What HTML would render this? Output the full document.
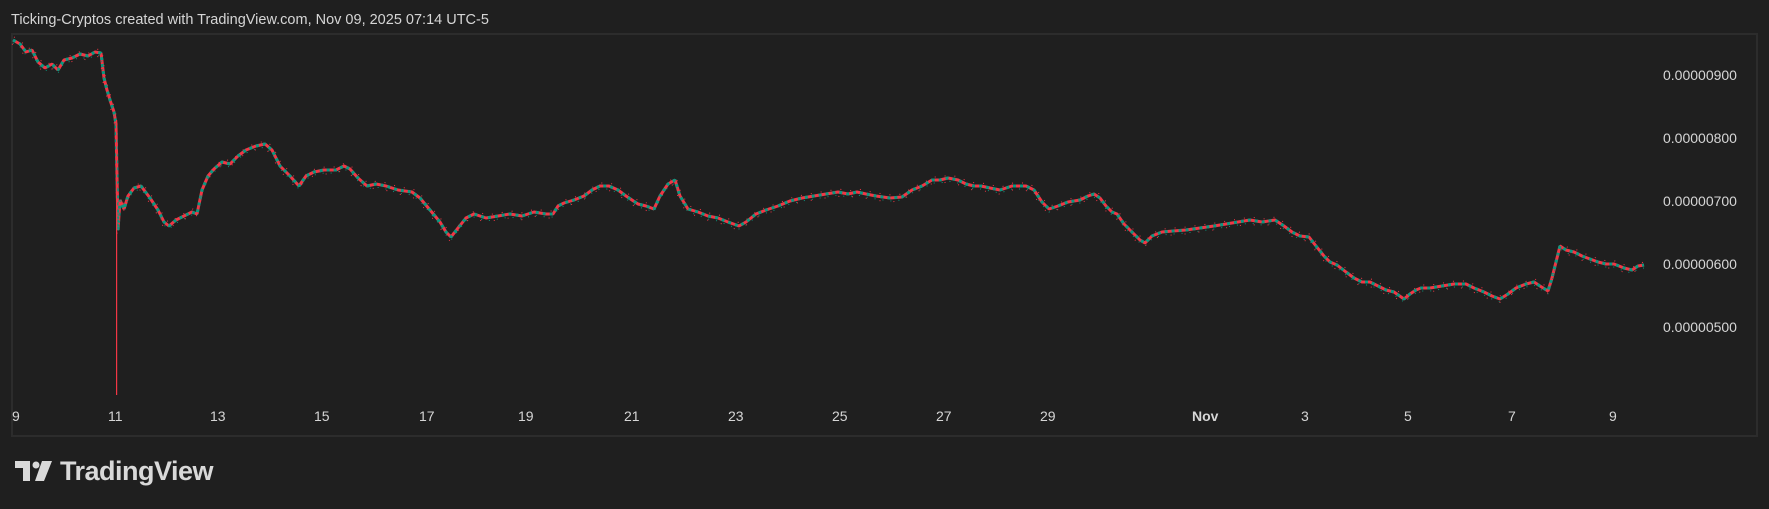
<!DOCTYPE html>
<html><head><meta charset="utf-8"><style>
html,body{margin:0;padding:0;background:#1f1f1f;width:1769px;height:509px;overflow:hidden;font-family:"Liberation Sans",sans-serif;}
.t{position:absolute;color:#d6d6d6;font-size:14px;}
#frame{position:absolute;left:11px;top:33px;width:1743px;height:400px;border:2px solid #2c2c2c;box-sizing:content-box;}
</style></head><body>
<div class="t" style="left:11px;top:12px;font-size:14.5px;">Ticking-Cryptos created with TradingView.com, Nov 09, 2025 07:14 UTC-5</div>
<div id="frame"></div>
<svg width="1769" height="509" style="position:absolute;left:0;top:0">
<defs>
<polyline id="p" points="13,40 20,44 26,52 32,50 38,62 45,68 52,64 58,70 64,60 72,58 80,54 88,56 95,52 101,53 104,78 107,90 110,100 114,112 116,124 118,230 120,200 124,209 128,196 134,188 141,186 150,198 158,210 164,222 169,226 176,220 184,216 192,212 197,214 202,190 208,176 214,169 222,162 230,164 238,156 246,150 256,146 265,144 272,150 280,166 290,176 299,186 306,176 314,172 324,170 336,170 344,166 350,169 358,178 367,186 376,184 386,186 398,190 412,192 420,198 430,210 440,222 446,232 451,237 458,228 466,218 474,214 486,218 498,216 510,214 522,216 534,212 546,214 553,214 558,206 564,203 574,200 584,196 592,190 600,186 609,186 618,190 626,196 638,204 646,206 654,209 660,196 668,184 675,180 680,196 688,209 698,212 708,216 718,218 728,222 739,226 746,222 756,214 766,210 778,206 790,201 802,198 814,196 826,194 838,192 848,194 857,192 866,194 876,196 890,198 902,197 912,190 922,186 932,180 940,180 948,178 958,180 966,184 974,186 981,186 990,188 1000,190 1012,186 1026,186 1034,190 1042,202 1049,209 1058,206 1068,202 1080,200 1088,196 1094,194 1100,198 1106,206 1112,212 1117,214 1124,224 1134,234 1140,240 1145,243 1152,236 1162,232 1173,231 1186,230 1200,228 1214,226 1226,224 1238,222 1250,220 1262,222 1275,220 1284,226 1292,232 1300,236 1309,237 1316,246 1324,256 1330,262 1337,265 1346,272 1354,278 1362,282 1370,282 1378,286 1386,290 1394,292 1404,299 1410,294 1416,290 1421,288 1430,288 1442,286 1454,284 1466,284 1474,288 1484,292 1492,296 1500,299 1508,294 1516,288 1526,284 1534,282 1540,286 1548,291 1552,278 1556,262 1560,246 1566,250 1574,252 1582,256 1590,259 1598,262 1606,264 1614,264 1624,268 1632,270 1638,266 1644,265"/>
</defs>
<g fill="none" stroke-linejoin="bevel">
<use href="#p" stroke="#f23645" stroke-width="3"/>
<use href="#p" stroke="#089981" stroke-width="3" stroke-dasharray="3 4"/>
<use href="#p" stroke="#089981" stroke-width="1" transform="translate(0,3)" stroke-dasharray="1 7"/>
<use href="#p" stroke="#f23645" stroke-width="1" transform="translate(1,-3)" stroke-dasharray="1 9"/>
<use href="#p" stroke="#f23645" stroke-width="1" transform="translate(-1,4)" stroke-dasharray="1 13"/>
</g>
<rect x="116" y="120" width="1.2" height="275" fill="#f23645"/>
</svg>
<div class="t" style="left:1663px;top:67px">0.00000900</div>
<div class="t" style="left:1663px;top:130px">0.00000800</div>
<div class="t" style="left:1663px;top:193px">0.00000700</div>
<div class="t" style="left:1663px;top:256px">0.00000600</div>
<div class="t" style="left:1663px;top:319px">0.00000500</div>
<div class="t" style="left:12px;top:408px">9</div>
<div class="t" style="left:108px;top:408px">11</div>
<div class="t" style="left:210px;top:408px">13</div>
<div class="t" style="left:314px;top:408px">15</div>
<div class="t" style="left:419px;top:408px">17</div>
<div class="t" style="left:518px;top:408px">19</div>
<div class="t" style="left:624px;top:408px">21</div>
<div class="t" style="left:728px;top:408px">23</div>
<div class="t" style="left:832px;top:408px">25</div>
<div class="t" style="left:936px;top:408px">27</div>
<div class="t" style="left:1040px;top:408px">29</div>
<div class="t" style="left:1192px;top:408px;font-weight:bold">Nov</div>
<div class="t" style="left:1301px;top:408px">3</div>
<div class="t" style="left:1404px;top:408px">5</div>
<div class="t" style="left:1508px;top:408px">7</div>
<div class="t" style="left:1609px;top:408px">9</div>
<svg style="position:absolute;left:15px;top:461px" width="40" height="22" viewBox="0 0 40 22">
<path d="M0 0H15V20H8V7H0Z" fill="#d9d9d9"/><circle cx="21" cy="4" r="3.5" fill="#d9d9d9"/><path d="M27 0H37L29 20H20Z" fill="#d9d9d9"/>
</svg>
<div style="position:absolute;left:60px;top:456px;font-size:27px;font-weight:bold;color:#d9d9d9;letter-spacing:-0.5px">TradingView</div>
</body></html>
